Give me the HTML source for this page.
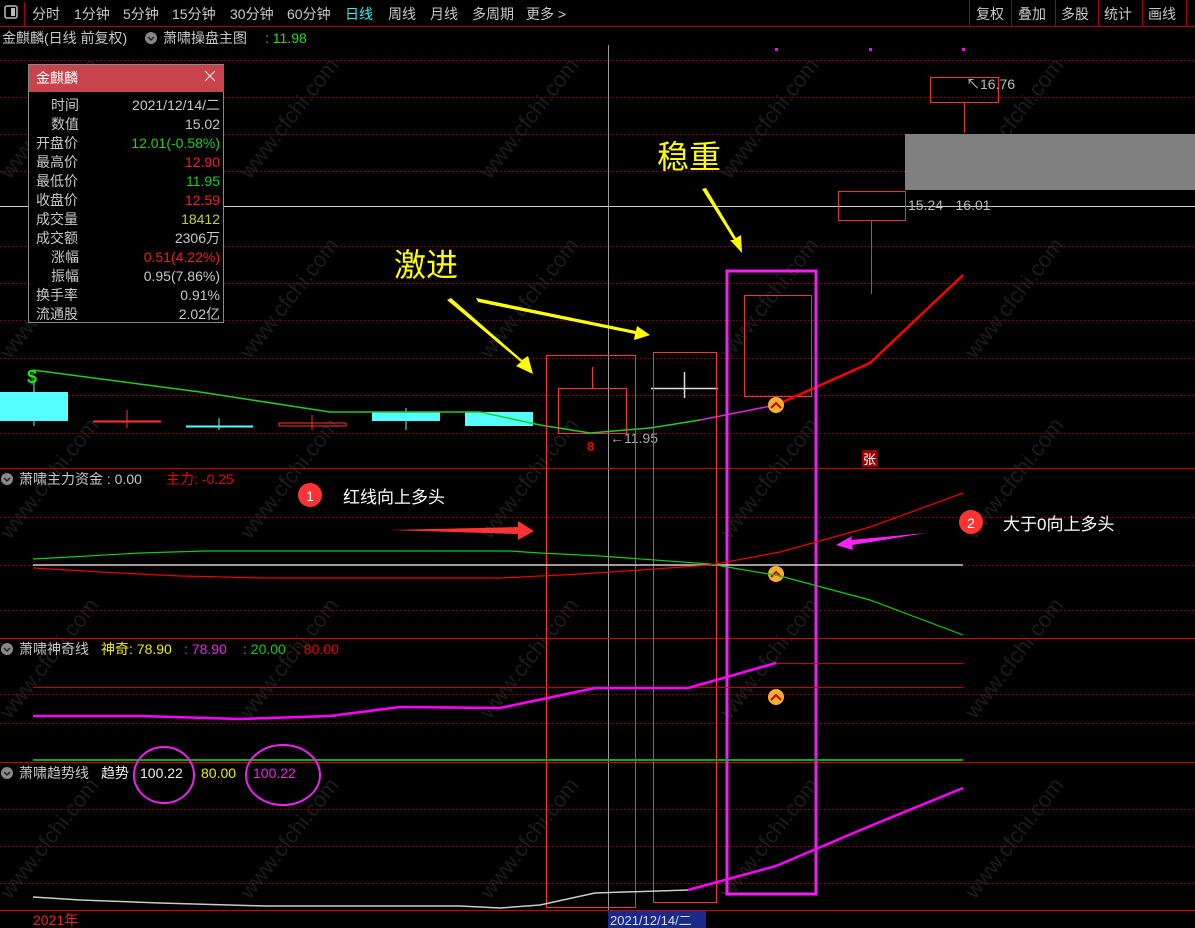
<!DOCTYPE html>
<html><head><meta charset="utf-8"><style>
html,body{margin:0;padding:0;background:#000;width:1195px;height:928px;overflow:hidden}
svg{display:block;font-family:"Liberation Sans","Noto Sans CJK SC",sans-serif}
</style></head><body>
<svg width="1195" height="928" viewBox="0 0 1195 928" xmlns="http://www.w3.org/2000/svg">
<defs><pattern id="dot" width="4" height="1" patternUnits="userSpaceOnUse"><rect width="2" height="1" fill="#8a0000"/></pattern></defs>
<rect width="1195" height="928" fill="#000"/>
<!-- watermarks -->
<g font-size="22" fill="#1c1c1c">
<text transform="translate(10,180) rotate(-52)">www.cfchi.com</text>
<text transform="translate(250,180) rotate(-52)">www.cfchi.com</text>
<text transform="translate(490,180) rotate(-52)">www.cfchi.com</text>
<text transform="translate(730,180) rotate(-52)">www.cfchi.com</text>
<text transform="translate(975,180) rotate(-52)">www.cfchi.com</text>
<text transform="translate(10,360) rotate(-52)">www.cfchi.com</text>
<text transform="translate(250,360) rotate(-52)">www.cfchi.com</text>
<text transform="translate(490,360) rotate(-52)">www.cfchi.com</text>
<text transform="translate(730,360) rotate(-52)">www.cfchi.com</text>
<text transform="translate(975,360) rotate(-52)">www.cfchi.com</text>
<text transform="translate(10,540) rotate(-52)">www.cfchi.com</text>
<text transform="translate(250,540) rotate(-52)">www.cfchi.com</text>
<text transform="translate(490,540) rotate(-52)">www.cfchi.com</text>
<text transform="translate(730,540) rotate(-52)">www.cfchi.com</text>
<text transform="translate(975,540) rotate(-52)">www.cfchi.com</text>
<text transform="translate(10,720) rotate(-52)">www.cfchi.com</text>
<text transform="translate(250,720) rotate(-52)">www.cfchi.com</text>
<text transform="translate(490,720) rotate(-52)">www.cfchi.com</text>
<text transform="translate(730,720) rotate(-52)">www.cfchi.com</text>
<text transform="translate(975,720) rotate(-52)">www.cfchi.com</text>
<text transform="translate(10,900) rotate(-52)">www.cfchi.com</text>
<text transform="translate(250,900) rotate(-52)">www.cfchi.com</text>
<text transform="translate(490,900) rotate(-52)">www.cfchi.com</text>
<text transform="translate(730,900) rotate(-52)">www.cfchi.com</text>
<text transform="translate(975,900) rotate(-52)">www.cfchi.com</text>
</g>
<!-- toolbar -->
<rect x="0" y="0" width="1195" height="26" fill="#000"/>
<line x1="0" y1="26.5" x2="1195" y2="26.5" stroke="#a00" stroke-width="1"/>
<rect x="5" y="6" width="12" height="12" rx="2" fill="none" stroke="#bbb" stroke-width="1.5"/><rect x="11" y="8" width="4" height="8" fill="#bbb"/>
<line x1="24.5" y1="2" x2="24.5" y2="26" stroke="#a00"/>
<g font-size="14" fill="#c8c8c8">
<text x="32" y="19">分时</text><text x="74" y="19">1分钟</text><text x="123" y="19">5分钟</text><text x="172" y="19">15分钟</text><text x="230" y="19">30分钟</text><text x="287" y="19">60分钟</text>
<text x="345" y="19" fill="#3ee">日线</text><text x="388" y="19">周线</text><text x="430" y="19">月线</text><text x="472" y="19">多周期</text><text x="526" y="19">更多 &gt;</text>
<text x="976" y="19">复权</text><text x="1018" y="19">叠加</text><text x="1061" y="19">多股</text><text x="1104" y="19">统计</text><text x="1148" y="19">画线</text>
</g>
<g stroke="#a00"><line x1="969.5" y1="0" x2="969.5" y2="26"/><line x1="1011.5" y1="0" x2="1011.5" y2="26"/><line x1="1055.5" y1="0" x2="1055.5" y2="26"/><line x1="1098.5" y1="0" x2="1098.5" y2="26"/><line x1="1142.5" y1="0" x2="1142.5" y2="26"/><line x1="1186.5" y1="0" x2="1186.5" y2="26"/></g>
<!-- title -->
<text x="2" y="43" font-size="14" fill="#c8c8c8">金麒麟(日线 前复权)</text>
<circle cx="151" cy="38" r="6" fill="#888"/><path d="M148 37l3 3 3-3" stroke="#222" stroke-width="1.5" fill="none"/>
<text x="163" y="43" font-size="14" fill="#c8c8c8">萧啸操盘主图</text>
<text x="265" y="43" font-size="14" fill="#2d2">: 11.98</text>
<!-- grid main -->
<g fill="url(#dot)">
<rect x="0" y="60" width="1195" height="1"/><rect x="0" y="97" width="1195" height="1"/><rect x="0" y="134" width="1195" height="1"/><rect x="0" y="171" width="1195" height="1"/>
<rect x="0" y="246" width="1195" height="1"/><rect x="0" y="283" width="1195" height="1"/><rect x="0" y="320" width="1195" height="1"/><rect x="0" y="358" width="1195" height="1"/><rect x="0" y="395" width="1195" height="1"/><rect x="0" y="433" width="1195" height="1"/>
<rect x="0" y="517" width="1195" height="1"/><rect x="0" y="565" width="1195" height="1"/><rect x="0" y="610" width="1195" height="1"/>
<rect x="0" y="694" width="1195" height="1"/><rect x="0" y="723" width="1195" height="1"/>
<rect x="0" y="809" width="1195" height="1"/><rect x="0" y="846" width="1195" height="1"/><rect x="0" y="883" width="1195" height="1"/>
</g>
<line x1="0" y1="206.5" x2="1195" y2="206.5" stroke="#ccc"/>
<line x1="608.5" y1="45" x2="608.5" y2="910" stroke="#999"/>
<g stroke="#c00"><line x1="0" y1="468.5" x2="1195" y2="468.5"/><line x1="0" y1="638.5" x2="1195" y2="638.5"/><line x1="0" y1="762.5" x2="1195" y2="762.5"/><line x1="0" y1="910.5" x2="1195" y2="910.5"/></g>
<!-- magenta dots -->
<g fill="#f0f"><rect x="775" y="48" width="3" height="3"/><rect x="869" y="48" width="3" height="3"/><rect x="962" y="48" width="3" height="3"/></g>
<!-- candles -->
<rect x="0" y="392" width="68" height="29" fill="#5ff"/><line x1="34" y1="380" x2="34" y2="426" stroke="#5ff"/>
<text x="27" y="383" font-size="18" fill="#2d2" font-weight="bold">$</text>
<line x1="93" y1="421.5" x2="161" y2="421.5" stroke="#f33" stroke-width="2"/><line x1="127" y1="410" x2="127" y2="428" stroke="#f33"/>
<line x1="186" y1="426.5" x2="253" y2="426.5" stroke="#5ff" stroke-width="2"/><line x1="219" y1="418" x2="219" y2="430" stroke="#5ff"/>
<rect x="279" y="423" width="67" height="3" fill="none" stroke="#f33"/><line x1="312" y1="415" x2="312" y2="430" stroke="#f33"/>
<rect x="372" y="412" width="68" height="9" fill="#5ff"/><line x1="406" y1="408" x2="406" y2="430" stroke="#5ff"/>
<rect x="465" y="412" width="68" height="14" fill="#5ff"/>
<rect x="558.5" y="388.5" width="68" height="45" fill="none" stroke="#f33"/><line x1="592.5" y1="367" x2="592.5" y2="388" stroke="#f33"/>
<line x1="651" y1="388.5" x2="718" y2="388.5" stroke="#ddd" stroke-width="1.5"/><line x1="684.5" y1="372" x2="684.5" y2="398" stroke="#ddd" stroke-width="1.5"/>
<rect x="744.5" y="295.5" width="67" height="101" fill="none" stroke="#e33"/>
<rect x="838.5" y="191.5" width="67" height="29" fill="none" stroke="#e33"/><line x1="871.5" y1="220" x2="871.5" y2="294" stroke="#e33"/>
<rect x="905" y="134" width="290" height="56" fill="#808080"/>
<rect x="930.5" y="77.5" width="68" height="25" fill="none" stroke="#e33"/><line x1="964.5" y1="102" x2="964.5" y2="133" stroke="#e33"/>
<text x="966" y="89" font-size="14" fill="#bbb">↖16.76</text>
<text x="908" y="210" font-size="14" fill="#bbb">15.24 - 16.01</text>
<text x="610" y="443" font-size="14" fill="#aaa">←11.95</text>
<text x="587" y="451" font-size="13" fill="#e00" font-weight="bold">8</text>
<!-- MA lines -->
<polyline points="33,370 200,392 330,412 480,412 540,425 590,433 650,428 700,420" fill="none" stroke="#2c2" stroke-width="1.5"/>
<polyline points="700,420 776,405" fill="none" stroke="#d2d" stroke-width="1.5"/>
<polyline points="776,405 870,363 963,275" fill="none" stroke="#f00" stroke-width="2.5"/>
<!-- marker circles -->
<g><circle cx="776" cy="405" r="8" fill="#f5b030"/><path d="M771 408l5-5 5 5" stroke="#c00" stroke-width="2" fill="none"/></g>
<g><circle cx="776" cy="574" r="8" fill="#f5b030"/><path d="M771 577l5-5 5 5" stroke="#c00" stroke-width="2" fill="none"/></g>
<g><circle cx="776" cy="697" r="8" fill="#f5b030"/><path d="M771 700l5-5 5 5" stroke="#c00" stroke-width="2" fill="none"/></g>
<rect x="862" y="450" width="16" height="17" fill="#900"/><text x="863" y="464" font-size="13" fill="#fff">张</text>
<!-- info box -->
<rect x="28.5" y="64.5" width="195" height="258" fill="#000" stroke="#888"/>
<rect x="29" y="65" width="195" height="27" fill="#c8434c"/>
<text x="36" y="83" font-size="14" fill="#fff">金麒麟</text>
<path d="M205 71l10 10M215 71l-10 10" stroke="#eee" stroke-width="1"/>
<g font-size="14" fill="#c8c8c8">
<text x="51" y="110">时间</text><text x="51" y="129">数值</text><text x="36" y="148">开盘价</text><text x="36" y="167">最高价</text><text x="36" y="186">最低价</text><text x="36" y="205">收盘价</text><text x="36" y="224">成交量</text><text x="36" y="243">成交额</text><text x="51" y="262">涨幅</text><text x="51" y="281">振幅</text><text x="36" y="300">换手率</text><text x="36" y="319">流通股</text>
</g>
<g font-size="14" text-anchor="end">
<text x="220" y="110" fill="#c8c8c8">2021/12/14/二</text><text x="220" y="129" fill="#c8c8c8">15.02</text><text x="220" y="148" fill="#2c2">12.01(-0.58%)</text><text x="220" y="167" fill="#e22">12.90</text><text x="220" y="186" fill="#2c2">11.95</text><text x="220" y="205" fill="#e22">12.59</text><text x="220" y="224" fill="#cc3">18412</text><text x="220" y="243" fill="#c8c8c8">2306万</text><text x="220" y="262" fill="#e22">0.51(4.22%)</text><text x="220" y="281" fill="#c8c8c8">0.95(7.86%)</text><text x="220" y="300" fill="#c8c8c8">0.91%</text><text x="220" y="319" fill="#c8c8c8">2.02亿</text>
</g>
<!-- annotations -->
<text x="394" y="276" font-size="32" fill="#ff0">激进</text>
<text x="657" y="168" font-size="32" fill="#ff0">稳重</text>
<g fill="#ff0">
<polygon points="447,300 451,298 522,360 528,356 533,374 516,366 521,362"/>
<polygon points="476,298 478,302 635,334 634,340 650,335 637,326 636,331"/>
<polygon points="702,189 706,188 736,238 741,235 742,253 730,240 734,240"/>
</g>
<polygon points="390,530 518,527 518,521 534,531 518,540 518,534" fill="#f33"/>
<polygon points="926,533 851,540 852,536 836,545 853,550 852,545" fill="#f2f"/>
<circle cx="310" cy="495" r="12" fill="#f33"/><text x="310" y="501" font-size="14" fill="#fff" text-anchor="middle">1</text>
<text x="343" y="503" font-size="17" fill="#fff">红线向上多头</text>
<circle cx="971" cy="522" r="12" fill="#f33"/><text x="971" y="528" font-size="14" fill="#fff" text-anchor="middle">2</text>
<text x="1003" y="530" font-size="17" fill="#fff">大于0向上多头</text>
<!-- boxes -->
<rect x="546.5" y="355.5" width="89" height="552" fill="none" stroke="#f33"/>
<rect x="653.5" y="352.5" width="63" height="550" fill="none" stroke="#f33"/>
<rect x="727" y="271" width="89" height="623" fill="none" stroke="#e2e" stroke-width="3"/>
<!-- panel 2 -->
<circle cx="7" cy="479" r="6" fill="#888"/><path d="M4 478l3 3 3-3" stroke="#222" stroke-width="1.5" fill="none"/>
<text x="19" y="484" font-size="14" fill="#c8c8c8">萧啸主力资金 : 0.00</text>
<text x="166" y="484" font-size="14" fill="#e00">主力: -0.25</text>
<line x1="33" y1="565" x2="963" y2="565" stroke="#ccc" stroke-width="1.5"/>
<polyline points="33,559 70,557 140,553 205,551 510,551 540,553 600,556 710,564 780,576 870,600 963,635" fill="none" stroke="#1c1" stroke-width="1.2"/>
<polyline points="33,568 100,572 180,576 265,578 500,578 580,574 640,570 710,565 780,552 870,527 963,493" fill="none" stroke="#e00" stroke-width="1.2"/>
<!-- panel 3 -->
<circle cx="7" cy="649" r="6" fill="#888"/><path d="M4 648l3 3 3-3" stroke="#222" stroke-width="1.5" fill="none"/>
<text x="19" y="654" font-size="14" fill="#c8c8c8">萧啸神奇线</text>
<text x="101" y="654" font-size="14" fill="#ee0">神奇: 78.90</text>
<text x="184" y="654" font-size="14" fill="#e2e">: 78.90</text>
<text x="243" y="654" font-size="14" fill="#1c1">: 20.00</text>
<text x="296" y="654" font-size="14" fill="#e00">: 80.00</text>
<line x1="33" y1="687.5" x2="963" y2="687.5" stroke="#c00"/>
<line x1="776" y1="663.5" x2="963" y2="663.5" stroke="#c00"/>
<line x1="33" y1="760" x2="963" y2="760" stroke="#1a1" stroke-width="2"/>
<polyline points="33,716 140,716 240,719 330,716 400,707 500,708 595,688 688,688 776,663" fill="none" stroke="#f0f" stroke-width="2.5"/>
<!-- panel 4 -->
<circle cx="7" cy="773" r="6" fill="#888"/><path d="M4 772l3 3 3-3" stroke="#222" stroke-width="1.5" fill="none"/>
<text x="19" y="778" font-size="14" fill="#c8c8c8">萧啸趋势线</text>
<text x="101" y="778" font-size="14" fill="#eee">趋势</text>
<text x="140" y="778" font-size="14" fill="#eee">100.22</text>
<text x="201" y="778" font-size="14" fill="#ee0">80.00</text>
<text x="253" y="778" font-size="14" fill="#e2e">100.22</text>
<ellipse cx="164" cy="775" rx="30" ry="28" fill="none" stroke="#e2e" stroke-width="2"/>
<ellipse cx="283" cy="775" rx="37" ry="30" fill="none" stroke="#e2e" stroke-width="2"/>
<polyline points="33,897 80,900 160,903 265,906 460,906 500,908 540,905 595,893 688,890" fill="none" stroke="#ccc" stroke-width="1.5"/>
<polyline points="688,890 776,866 870,826 963,788" fill="none" stroke="#f0f" stroke-width="2.5"/>
<!-- date row -->
<text x="33" y="925" font-size="14" fill="#e22">2021年</text>
<rect x="608" y="911" width="98" height="17" fill="#1a2a8a"/>
<text x="610" y="925" font-size="13" fill="#ddd">2021/12/14/二</text>
</svg>
</body></html>
